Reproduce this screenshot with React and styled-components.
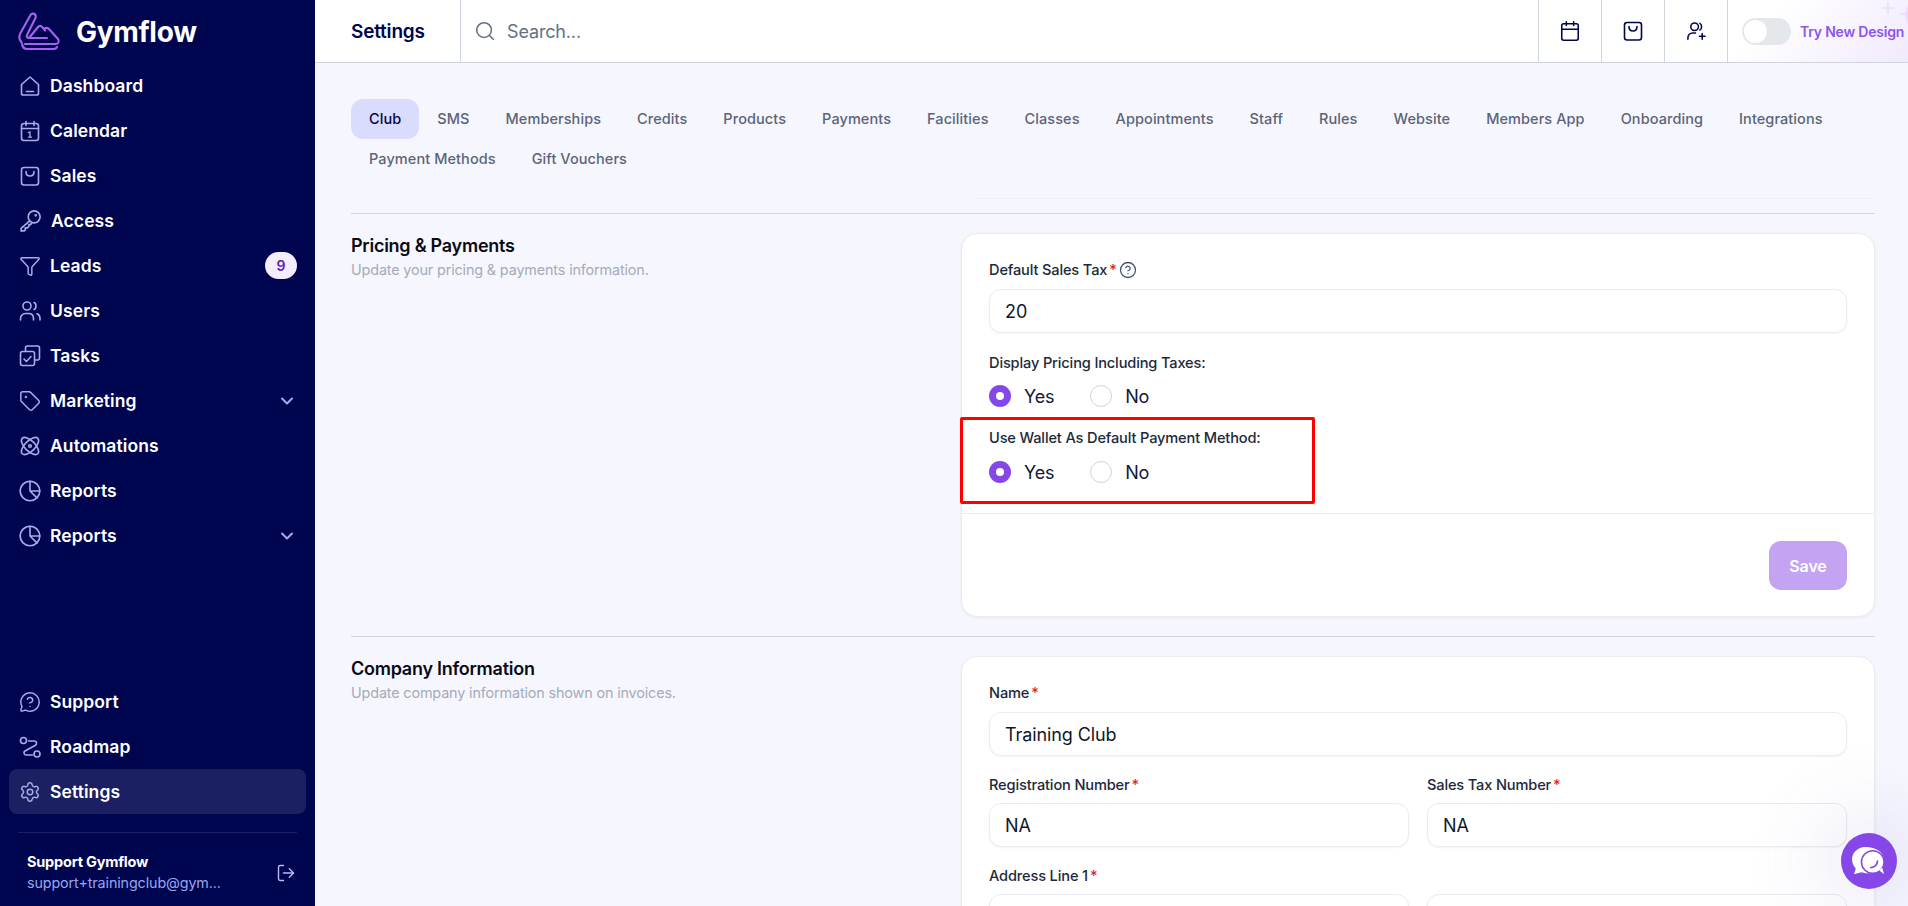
import styled, { createGlobalStyle } from 'styled-components';
import { Calendar, CircleHelp, ChevronDown, Funnel, LogOut, MessageCircleQuestion, Search, Settings, Tag } from 'lucide-react';

const GlobalStyle = createGlobalStyle`
  html, body { margin: 0; height: 100%; overflow: hidden; }
  body { font-family: Inter, "Noto Sans", sans-serif; background: #f6f7fe; color: #101828; }
  * { box-sizing: border-box; }
`;

const Page = styled.div`
  display: flex;
  height: 906px;
  overflow: hidden;
`;

const Sidebar = styled.aside`
  width: 315px;
  flex: none;
  display: flex;
  flex-direction: column;
  background: #00054f;
  color: #fff;
`;

const Brand = styled.div`
  height: 63px;
  flex: none;
  display: flex;
  align-items: center;
  gap: 13px;
  padding: 0 0 0 17px;
`;

const BrandName = styled.span`
  font-size: 28px;
  font-weight: 700;
  letter-spacing: -0.3px;
`;

const Nav = styled.nav`
  display: flex;
  flex-direction: column;
  padding: 0 9px;
`;

const NavItem = styled.a`
  height: 45px;
  display: flex;
  align-items: center;
  gap: 9px;
  padding: 0 9px 0 10px;
  border-radius: 8px;
  font-size: 17.5px;
  font-weight: 600;
  letter-spacing: 0.1px;
  background: ${(p) => (p.$active ? '#1a2062' : 'transparent')};
  svg { color: #a6ade9; flex: none; }
`;

const NavLabel = styled.span`
  flex: 1;
`;

const Badge = styled.span`
  width: 32px;
  height: 27px;
  border-radius: 14px;
  background: #f3edfd;
  color: #5b21b6;
  font-size: 14px;
  font-weight: 600;
  display: flex;
  align-items: center;
  justify-content: center;
`;

const Spacer = styled.div`
  flex: 1;
`;

const Account = styled.div`
  margin: 18px 18px 0;
  height: 74px;
  border-top: 1px solid #1a2062;
  display: flex;
  align-items: flex-start;
  justify-content: space-between;
  padding: 19px 1px 0 9px;
`;

const AccountName = styled.div`
  font-size: 14.5px;
  font-weight: 700;
  line-height: 20px;
  letter-spacing: -0.2px;
`;

const AccountMail = styled.div`
  font-size: 14.3px;
  line-height: 22px;
  color: #98a4f0;
  letter-spacing: -0.1px;
`;

const LogoutBtn = styled.span`
  color: #b6bdf3;
  margin-top: 11px;
  display: flex;
`;

const Main = styled.main`
  flex: 1;
  min-width: 0;
  display: flex;
  flex-direction: column;
  overflow: hidden;
`;

const TopBar = styled.header`
  height: 63px;
  flex: none;
  display: flex;
  background: #fff;
  border-bottom: 1px solid #d0d5dd;
`;

const PageTitle = styled.div`
  width: 146px;
  padding-left: 36px;
  border-right: 1px solid #d0d5dd;
  display: flex;
  align-items: center;
  font-size: 19px;
  font-weight: 600;
  color: #00054f;
  letter-spacing: -0.2px;
`;

const SearchBox = styled.div`
  flex: 1;
  display: flex;
  align-items: center;
  gap: 11px;
  padding-left: 13px;
  font-size: 18px;
  color: #667085;
  letter-spacing: -0.15px;
  svg { color: #667085; }
`;

const IconCell = styled.div`
  width: 63px;
  border-left: 1px solid #d0d5dd;
  display: flex;
  align-items: center;
  justify-content: center;
  color: #00054f;
`;

const TryCell = styled.div`
  position: relative;
  width: 181px;
  border-left: 1px solid #d0d5dd;
  display: flex;
  align-items: center;
  padding-left: 14px;
  gap: 9px;
  background: linear-gradient(135deg, #fff 25%, #f1e9fd 100%);
  white-space: nowrap;
`;

const Toggle = styled.span`
  width: 49px;
  height: 27px;
  flex: none;
  border-radius: 14px;
  background: #e4e7ec;
  padding: 2px;
  display: flex;
  &::before {
    content: '';
    width: 23px;
    height: 23px;
    border-radius: 50%;
    background: #fff;
  }
`;

const TryText = styled.span`
  font-size: 14px;
  font-weight: 600;
  color: #8b55ef;
  letter-spacing: -0.2px;
`;

const Sparkle = styled.svg`
  position: absolute;
  right: 0;
  top: 0;
`;

const Content = styled.div`
  flex: 1;
  padding: 36px 33px 0 36px;
  overflow: hidden;
`;

const Tabs = styled.div`
  display: flex;
  flex-wrap: wrap;
  max-width: 1524px;
`;

const Tab = styled.a`
  height: 40px;
  padding: 0 18px 2px;
  border-radius: 12px;
  display: flex;
  align-items: center;
  font-size: 14.5px;
  font-weight: 500;
  letter-spacing: 0.08px;
  color: ${(p) => (p.$active ? '#00054f' : '#5b6478')};
  background: ${(p) => (p.$active ? '#d9dcfc' : 'transparent')};
`;

const TabsEdge = styled.div`
  height: 1px;
  margin: 19px 0 14px 624px;
  background: #eef0fa;
`;

const Section = styled.section`
  display: grid;
  grid-template-columns: 610px 914px;
  border-top: 1px solid #d0d5dd;
  padding: 19px 0;
`;

const SectionHead = styled.div`
  padding-top: 1px;
`;

const SectionTitle = styled.h2`
  margin: 0;
  font-size: 18px;
  line-height: 24px;
  font-weight: 600;
  color: #0a0a14;
  letter-spacing: -0.25px;
`;

const SectionText = styled.p`
  margin: 1px 0 0;
  font-size: 14.4px;
  line-height: 22px;
  color: #a4abb9;
  letter-spacing: -0.15px;
`;

const Card = styled.div`
  background: #fff;
  border: 1px solid #eaecf0;
  border-radius: 16px;
  box-shadow: 0 1px 3px rgba(16, 24, 40, 0.06);
`;

const CardBody = styled.div`
  padding: 26px 27px 0;
  display: flex;
  flex-direction: column;
`;

const Label = styled.label`
  display: flex;
  align-items: center;
  gap: 2px;
  height: 20px;
  font-size: 14.6px;
  line-height: 20px;
  font-weight: 500;
  color: #1d2939;
  letter-spacing: -0.15px;
  svg { color: #475467; margin-left: 0; }
`;

const Req = styled.span`
  color: #e11d1d;
`;

const Input = styled.div`
  height: 44px;
  margin-top: 9px;
  padding: 0 15px;
  display: flex;
  align-items: center;
  border: 1px solid #eaecf0;
  border-radius: 12px;
  box-shadow: 0 1px 2px rgba(16, 24, 40, 0.05);
  font-size: 18px;
  color: #101828;
  letter-spacing: -0.1px;
  background: #fff;
`;

const Field = styled.div`
  margin-top: ${(p) => p.$top || 0}px;
  min-width: 0;
`;

const RadioGroup = styled.div`
  display: flex;
  gap: 36px;
  margin-top: ${(p) => p.$top}px;
`;

const RadioOption = styled.div`
  display: flex;
  align-items: center;
  gap: 13px;
  height: 22px;
  font-size: 18px;
  color: #101840;
  letter-spacing: -0.2px;
`;

const RadioDot = styled.span`
  width: 22px;
  height: 22px;
  border-radius: 50%;
  flex: none;
  background: ${(p) => (p.$on ? '#8547e8' : '#fff')};
  border: ${(p) => (p.$on ? 'none' : '1px solid #d0d5dd')};
  display: flex;
  align-items: center;
  justify-content: center;
  &::after {
    content: '';
    width: 8px;
    height: 8px;
    border-radius: 50%;
    background: ${(p) => (p.$on ? '#fff' : 'transparent')};
  }
`;

const WalletBlock = styled.div`
  position: relative;
  margin-top: 21px;
`;

const Highlight = styled.div`
  position: absolute;
  left: -29px;
  top: -11px;
  width: 355px;
  height: 87px;
  border: 3px solid #ff0000;
  border-radius: 2px;
  pointer-events: none;
`;

const CardFoot = styled.div`
  margin-top: 30px;
  border-top: 1px solid #eaecf0;
  padding: 27px 27px 26px;
  display: flex;
  justify-content: flex-end;
`;

const SaveBtn = styled.button`
  width: 78px;
  height: 49px;
  border: none;
  border-radius: 12px;
  background: #c4a3f3;
  color: #fff;
  font: 600 16px Inter, sans-serif;
  letter-spacing: -0.1px;
`;

const TwoCols = styled.div`
  display: grid;
  grid-template-columns: 1fr 1fr;
  gap: 18px;
  margin-top: 19px;
  ${Input} { margin-top: 8px; }
`;

const ChatBubble = styled.div`
  position: fixed;
  left: 1841px;
  top: 833px;
  width: 56px;
  height: 56px;
  border-radius: 50%;
  background: #8547e8;
  display: flex;
  align-items: center;
  justify-content: center;
  box-shadow: 0 0 70px 36px rgba(120, 100, 190, 0.09);
`;

const Logo = () => (
  <svg width="46" height="40" viewBox="6 5 46 40" fill="none" stroke="#a761ee" strokeWidth="2.1" strokeLinejoin="round" strokeLinecap="round">
    <path d="M24 7.500c-1.500-1.500-3.500-1-4.500.5L9.500 26c-2 3.500-1.500 6.500 1 9.500" />
    <path d="M24 7.500c1 1 1 2.500.2 4L16 28c-.8 1.500.2 3 2 3h18" />
    <path d="M18 31 27 20c1.200-1.500 3-1.500 4.200 0l3 3.500" />
    <path d="M33 22c1.200-1.500 3.500-1.500 5 0l9 10c1.500 2 .5 5-2 5H14" />
    <path d="M11 37c.5 3 2.500 5 5 5h27c1.500 0 2.500-1 3-2" />
  </svg>
);

const Ico = ({ children, size = 22 }) => (
  <svg width={size} height={size} viewBox="0 0 22 22" fill="none" stroke="currentColor" strokeWidth="1.6" strokeLinecap="round" strokeLinejoin="round">
    {children}
  </svg>
);

const HomeIcon = () => (
  <Ico>
    <path d="M2.500 9.500 11 2l8.500 7.500v8.700a1.800 1.800 0 0 1-1.800 1.800H4.300a1.800 1.800 0 0 1-1.800-1.800z" />
    <path d="M7.500 16.500h7" />
  </Ico>
);

const CalendarOneIcon = () => (
  <Ico>
    <rect x="2.500" y="3.500" width="17" height="17" rx="2.500" />
    <path d="M2.500 8.500h17M7 1.500v4M15 1.500v4" />
    <path d="M9.500 12.500l1.500-.8v5.500M9.500 17.200h3" strokeWidth="1.300" />
  </Ico>
);

const BagIcon = () => (
  <Ico>
    <rect x="2.500" y="2.500" width="17" height="17.500" rx="2.500" />
    <path d="M7 6.500c0 6 8 6 8 0" />
  </Ico>
);

const KeyIcon = () => (
  <Ico size={23}>
    <circle cx="14.500" cy="7.500" r="5.700" />
    <path d="M10 11.500 2 18.500v2.500h3l1-1v-2h2l1.500-1.500V15h1.500l1.500-2" />
    <circle cx="16" cy="6" r="0.500" />
  </Ico>
);

const UsersIcon = () => (
  <Ico>
    <circle cx="8" cy="6" r="4" />
    <path d="M1.500 20v-1.500c0-3 2.500-5 5-5h3c3 0 5 2 5 5V20" />
    <path d="M15 2.500c2.700.8 2.700 6.200 0 7" />
    <path d="M18 13.800c2 .7 3 2.500 3 4.700V20" />
  </Ico>
);

const UserPlusIcon = () => (
  <Ico size={21}>
    <circle cx="9" cy="6" r="4" />
    <path d="M2 19v-1.500a5 5 0 0 1 5-5h3" />
    <path d="M14.500 2.500c2.500 1 2.500 6 0 7" />
    <path d="M17 13v6M14 16h6" />
  </Ico>
);

const TasksIcon = () => (
  <Ico>
    <path d="M6.500 6V3a2 2 0 0 1 2-2h10a2 2 0 0 1 2 2v10a2 2 0 0 1-2 2h-3" />
    <rect x="1.500" y="6.500" width="14" height="14" rx="2" />
    <path d="M5 14l2.500 2.500 4.500-5" />
  </Ico>
);

const AtomIcon = () => (
  <Ico>
    <ellipse cx="11" cy="11" rx="11" ry="5.200" transform="rotate(45 11 11)" />
    <ellipse cx="11" cy="11" rx="11" ry="5.200" transform="rotate(-45 11 11)" />
    <circle cx="11" cy="11" r="1.300" />
  </Ico>
);

const PieIcon = () => (
  <Ico>
    <circle cx="11" cy="11" r="9.800" />
    <path d="M11 1.200V11h9.800M11 11l6.900 6.900" />
  </Ico>
);

const RoadmapIcon = () => (
  <Ico>
    <circle cx="4.500" cy="4.500" r="3" />
    <circle cx="18" cy="18" r="3" />
    <path d="M9.500 5h5.500c2.800 0 3.300 2.800 1.500 4.300L6 15c-2 1.500-1 4 1.500 4h6" />
  </Ico>
);

const ChatGlyph = () => (
  <svg width="36" height="32" viewBox="0 0 38 34">
    <path d="M15 2C7 2 1 8 1 15c0 5 2 8 4 10l-2 6 8-2c1 .5 3 1 4 1h8c7 0 12-6 12-14S27 2 15 2z" fill="#fff" />
    <circle cx="23" cy="18" r="12" fill="#fff" stroke="#8547e8" strokeWidth="1.600" />
    <path d="M30 27l5 4-2-7z" fill="#fff" />
    <path d="M28 17c0 4-3 7-7 7" fill="none" stroke="#8547e8" strokeWidth="1.800" strokeLinecap="round" />
  </svg>
);

const mainNav = [
  { label: 'Dashboard', icon: <HomeIcon /> },
  { label: 'Calendar', icon: <CalendarOneIcon /> },
  { label: 'Sales', icon: <BagIcon /> },
  { label: 'Access', icon: <KeyIcon /> },
  { label: 'Leads', icon: <Funnel size={22} strokeWidth={1.6} />, badge: '9' },
  { label: 'Users', icon: <UsersIcon /> },
  { label: 'Tasks', icon: <TasksIcon /> },
  { label: 'Marketing', icon: <Tag size={22} strokeWidth={1.6} />, more: true },
  { label: 'Automations', icon: <AtomIcon /> },
  { label: 'Reports', icon: <PieIcon /> },
  { label: 'Reports', icon: <PieIcon />, more: true },
];

const bottomNav = [
  { label: 'Support', icon: <MessageCircleQuestion size={22} strokeWidth={1.6} /> },
  { label: 'Roadmap', icon: <RoadmapIcon /> },
  { label: 'Settings', icon: <Settings size={22} strokeWidth={1.6} />, active: true },
];

const tabs = ['Club', 'SMS', 'Memberships', 'Credits', 'Products', 'Payments', 'Facilities', 'Classes', 'Appointments', 'Staff', 'Rules', 'Website', 'Members App', 'Onboarding', 'Integrations', 'Payment Methods', 'Gift Vouchers'];

const renderNav = (items) => items.map((item, i) => (
  <NavItem key={i} $active={item.active}>
    {item.icon}
    <NavLabel>{item.label}</NavLabel>
    {item.badge && <Badge>{item.badge}</Badge>}
    {item.more && <ChevronDown size={20} strokeWidth={2.4} />}
  </NavItem>
));

const YesNo = ({ top }) => (
  <RadioGroup $top={top}>
    <RadioOption><RadioDot $on />Yes</RadioOption>
    <RadioOption><RadioDot />No</RadioOption>
  </RadioGroup>
);

export default function App() {
  return (
    <>
      <GlobalStyle />
      <Page>
        <Sidebar>
          <Brand>
            <Logo />
            <BrandName>Gymflow</BrandName>
          </Brand>
          <Nav>{renderNav(mainNav)}</Nav>
          <Spacer />
          <Nav>{renderNav(bottomNav)}</Nav>
          <Account>
            <div>
              <AccountName>Support Gymflow</AccountName>
              <AccountMail>support+trainingclub@gym...</AccountMail>
            </div>
            <LogoutBtn><LogOut size={20} strokeWidth={1.7} /></LogoutBtn>
          </Account>
        </Sidebar>
        <Main>
          <TopBar>
            <PageTitle>Settings</PageTitle>
            <SearchBox>
              <Search size={22} strokeWidth={1.7} />
              Search...
            </SearchBox>
            <IconCell><Calendar size={22} strokeWidth={1.7} /></IconCell>
            <IconCell><BagIcon /></IconCell>
            <IconCell><UserPlusIcon /></IconCell>
            <TryCell>
              <Toggle />
              <TryText>Try New Design</TryText>
              <Sparkle width="28" height="26" viewBox="0 0 28 26" fill="#eadefb">
                <path d="M8 0l1.200 6.800L16 8l-6.800 1.200L8 16 6.800 9.200 0 8l6.800-1.200z" />
                <path d="M27 4l1.500 8.500L37 14l-8.500 1.500L27 24l-1.500-8.500L17 14l8.500-1.500z" />
              </Sparkle>
            </TryCell>
          </TopBar>
          <Content>
            <Tabs>
              {tabs.map((t) => <Tab key={t} $active={t === 'Club'}>{t}</Tab>)}
            </Tabs>
            <TabsEdge />
            <Section>
              <SectionHead>
                <SectionTitle>Pricing &amp; Payments</SectionTitle>
                <SectionText>Update your pricing &amp; payments information.</SectionText>
              </SectionHead>
              <Card>
                <CardBody>
                  <Label>Default Sales Tax<Req>*</Req><CircleHelp size={18} strokeWidth={1.7} /></Label>
                  <Input>20</Input>
                  <Field $top={20}>
                    <Label>Display Pricing Including Taxes:</Label>
                  </Field>
                  <YesNo top={12} />
                  <WalletBlock>
                    <Label>Use Wallet As Default Payment Method:</Label>
                    <YesNo top={13} />
                    <Highlight />
                  </WalletBlock>
                </CardBody>
                <CardFoot>
                  <SaveBtn>Save</SaveBtn>
                </CardFoot>
              </Card>
            </Section>
            <Section>
              <SectionHead>
                <SectionTitle>Company Information</SectionTitle>
                <SectionText>Update company information shown on invoices.</SectionText>
              </SectionHead>
              <Card>
                <CardBody>
                  <Label>Name<Req>*</Req></Label>
                  <Input>Training Club</Input>
                  <TwoCols>
                    <Field>
                      <Label>Registration Number<Req>*</Req></Label>
                      <Input>NA</Input>
                    </Field>
                    <Field>
                      <Label>Sales Tax Number<Req>*</Req></Label>
                      <Input>NA</Input>
                    </Field>
                  </TwoCols>
                  <TwoCols>
                    <Field>
                      <Label>Address Line 1<Req>*</Req></Label>
                      <Input />
                    </Field>
                    <Field>
                      <Label>&nbsp;</Label>
                      <Input />
                    </Field>
                  </TwoCols>
                </CardBody>
              </Card>
            </Section>
          </Content>
        </Main>
        <ChatBubble><ChatGlyph /></ChatBubble>
      </Page>
    </>
  );
}
